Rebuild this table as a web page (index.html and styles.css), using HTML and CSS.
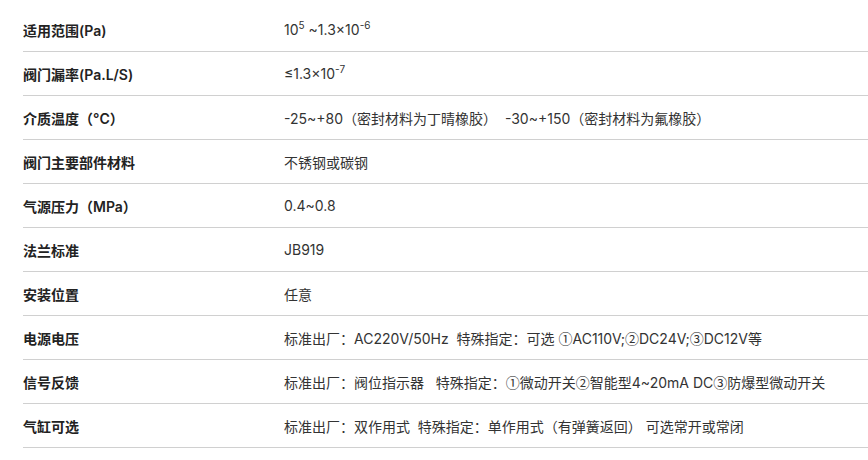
FILE: index.html
```html
<!DOCTYPE html>
<html lang="zh-CN">
<head>
<meta charset="utf-8">
<link rel="stylesheet" href="styles.css">
</head>
<body>
<div class="spec">
  <div class="row"><div class="k">适用范围(Pa)</div><div class="v">10<sup>5</sup> ~1.3×10<sup>-6</sup></div></div>
  <div class="row"><div class="k">阀门漏率(Pa.L/S)</div><div class="v">≤1.3×10<sup>-7</sup></div></div>
  <div class="row"><div class="k">介质温度（°C）</div><div class="v">-25~+80（密封材料为丁晴橡胶） &nbsp;-30~+150（密封材料为氟橡胶）</div></div>
  <div class="row"><div class="k">阀门主要部件材料</div><div class="v">不锈钢或碳钢</div></div>
  <div class="row"><div class="k">气源压力（MPa）</div><div class="v">0.4~0.8</div></div>
  <div class="row"><div class="k">法兰标准</div><div class="v">JB919</div></div>
  <div class="row"><div class="k">安装位置</div><div class="v">任意</div></div>
  <div class="row"><div class="k">电源电压</div><div class="v">标准出厂：AC220V/50Hz &nbsp;特殊指定：可选 <span class="c">①</span>AC110V;<span class="c">②</span>DC24V;<span class="c">③</span>DC12V等</div></div>
  <div class="row"><div class="k">信号反馈</div><div class="v">标准出厂：阀位指示器 &nbsp; 特殊指定：<span class="c">①</span>微动开关<span class="c">②</span>智能型4~20mA DC<span class="c">③</span>防爆型微动开关</div></div>
  <div class="row"><div class="k">气缸可选</div><div class="v">标准出厂：双作用式 &nbsp;特殊指定：单作用式（有弹簧返回） 可选常开或常闭</div></div>
</div>
</body>
</html>
```
FILE: styles.css
```css
html, body {
  margin: 0;
  padding: 0;
  background: #fff;
}
body {
  font-family: "Inter", "Noto Sans CJK SC", sans-serif;
  font-size: 14px;
  color: #333;
  padding: 8px 0 0 23px;
}
.spec {
  display: flex;
  flex-direction: column;
}
.row {
  display: flex;
  align-items: center;
  height: 43px;
  border-bottom: 1px solid #d0d0d0;
}
.k {
  width: 261px;
  flex: none;
  font-weight: 600;
  color: #222;
}
.v {
  white-space: nowrap;
  color: #333;
}
.c {
  font-family: "Noto Sans CJK SC", sans-serif;
}
sup {
  font-size: 10px;
  line-height: 0;
  vertical-align: 6px;
}
```
